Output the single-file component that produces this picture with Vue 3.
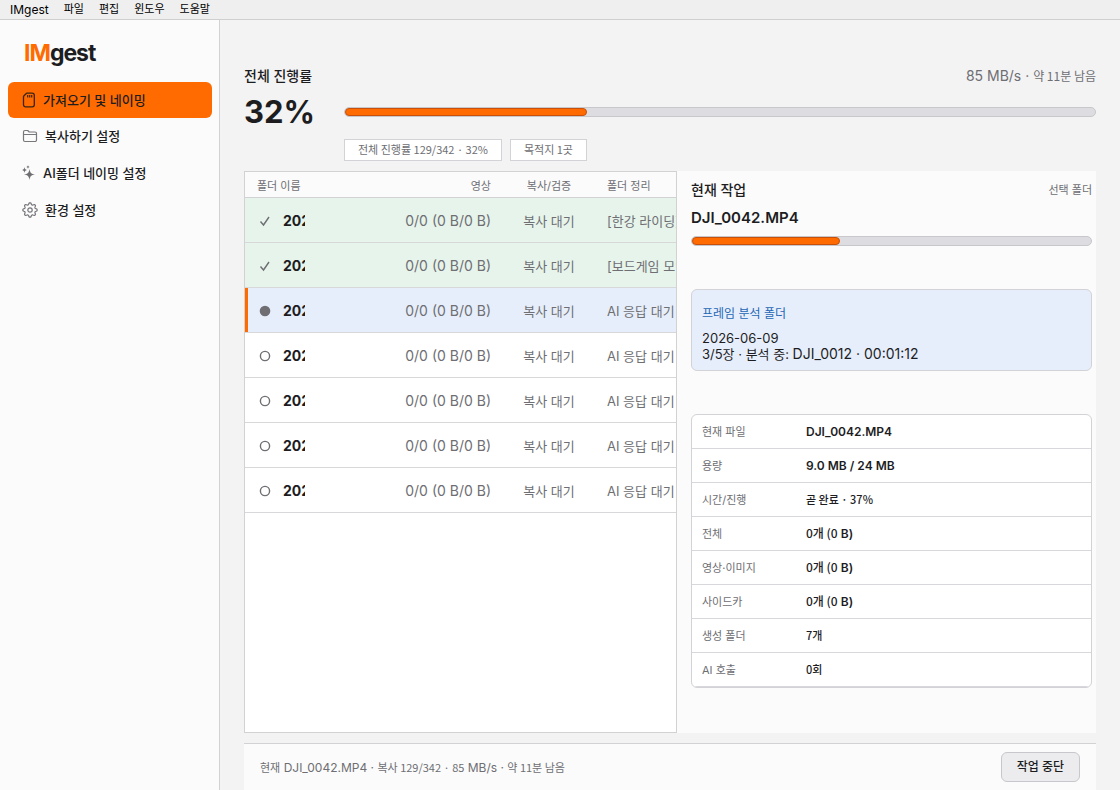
<script setup>
const menus = ['파일', '편집', '윈도우', '도움말']

const rows = [
  { state: 'done', name: '2026', tidy: '[한강 라이딩]' },
  { state: 'done', name: '2026', tidy: '[보드게임 모임]' },
  { state: 'active', name: '2026', tidy: 'AI 응답 대기' },
  { state: 'idle', name: '2026', tidy: 'AI 응답 대기' },
  { state: 'idle', name: '2026', tidy: 'AI 응답 대기' },
  { state: 'idle', name: '2026', tidy: 'AI 응답 대기' },
  { state: 'idle', name: '2026', tidy: 'AI 응답 대기' }
]

const details = [
  { label: '현재 파일', value: 'DJI_0042.MP4' },
  { label: '용량', value: '9.0 MB / 24 MB' },
  { label: '시간/진행', kr: '곧 완료 · 37%' },
  { label: '전체', kr: '0개 (0', value: ' B)' },
  { label: '영상·이미지', kr: '0개 (0', value: ' B)' },
  { label: '사이드카', kr: '0개 (0', value: ' B)' },
  { label: '생성 폴더', kr: '7개' },
  { label: 'AI 호출', kr: '0회' }
]

const total = 32.3
const current = 37.1

// Eight rounded teeth around the centre of an 18px box.
const gear = 'M' + Array.from({ length: 64 }, (_, i) => {
  const a = (i / 64) * Math.PI * 2
  const r = 6.3 + 0.9 * Math.tanh(2 * Math.cos(8 * a))
  return (9 + r * Math.cos(a)).toFixed(2) + ' ' + (9 + r * Math.sin(a)).toFixed(2)
}).join('L') + 'z'
</script>

<template>
  <div class="app">
    <nav class="menubar">
      <button type="button">IMgest</button>
      <button v-for="m in menus" :key="m" type="button" class="menu">{{ m }}</button>
    </nav>

    <div class="shell">
      <aside class="sidebar">
        <h1 class="brand"><span>IM</span>gest</h1>
        <button type="button" class="nav selected">
          <svg width="16" height="18" viewBox="0 0 16 18" fill="none" stroke="#3a2413">
            <path d="M6 2.200h5.300a2 2 0 0 1 2 2v9.600a2 2 0 0 1-2 2H4.500a2 2 0 0 1-2-2V6q0-.7.500-1.200l2-2q.4-.6 1-.6z" stroke-width="1.300" stroke-linejoin="round" />
            <path d="M6.700 4v2.500M8.700 4v2.500M10.700 4v2.500" stroke-width="1.200" />
          </svg>
          <span>가져오기 및 네이밍</span>
        </button>
        <button type="button" class="nav">
          <svg width="18" height="18" viewBox="0 0 18 18" fill="none" stroke="#77777c" stroke-width="1.200" stroke-linejoin="round">
            <path d="M2.500 13V5A1.500 1.500 0 0 1 4 3.500h2.700L8.200 5h5.800a1.500 1.500 0 0 1 1.500 1.500V13a1.500 1.500 0 0 1-1.500 1.500H4A1.500 1.500 0 0 1 2.500 13zM2.500 7.500h13" />
          </svg>
          <span>복사하기 설정</span>
        </button>
        <button type="button" class="nav">
          <svg width="16" height="18" viewBox="0 0 16 18" fill="#6e6e73">
            <path d="M8.500 5c.6 3.700 1.600 4.900 5.500 5.500-3.900.6-4.900 1.800-5.500 5.500-.6-3.700-1.600-4.900-5.500-5.500 3.900-.6 4.900-1.800 5.500-5.500z" />
            <path d="M3.500 3c.3 1.900.7 2.600 2.800 3-2.100.4-2.500 1.100-2.800 3-.3-1.900-.7-2.600-2.800-3 2.100-.4 2.500-1.100 2.800-3zM7 1c.2 1.300.5 1.700 1.800 2-1.300.3-1.600.7-1.800 2-.2-1.300-.5-1.700-1.800-2 1.300-.3 1.600-.7 1.800-2z" />
          </svg>
          <span>AI폴더 네이밍 설정</span>
        </button>
        <button type="button" class="nav">
          <svg width="18" height="18" viewBox="0 0 18 18" fill="none" stroke="#77777c" stroke-width="1.200" stroke-linejoin="round">
            <path :d="gear" />
            <circle cx="9" cy="9" r="2.200" />
          </svg>
          <span>환경 설정</span>
        </button>
      </aside>

      <main class="main">
        <header class="summary">
          <div class="summary-top">
            <h2 class="title">전체 진행률</h2>
            <p class="rate">85 MB/s · <span>약 11분 남음</span></p>
          </div>
          <div class="summary-body">
            <strong class="percent">32%</strong>
            <div class="summary-side">
              <div class="bar" role="progressbar" aria-label="전체 진행률" :aria-valuenow="total">
                <i :style="{ width: total + '%' }"></i>
              </div>
            </div>
          </div>
          <div class="chips">
            <span class="chip">전체 진행률 129/342 · 32%</span>
            <span class="chip">목적지 1곳</span>
          </div>
        </header>

        <div class="work">
          <section class="list">
            <table class="folders">
              <colgroup>
                <col class="c-name" /><col class="c-video" /><col class="c-copy" /><col class="c-tidy" />
              </colgroup>
              <thead>
                <tr><th>폴더 이름</th><th class="right">영상</th><th class="center">복사/검증</th><th>폴더 정리</th></tr>
              </thead>
              <tbody>
                <tr v-for="(r, i) in rows" :key="i" :class="r.state">
                  <td>
                    <div class="name">
                      <svg width="14" height="14" viewBox="0 0 14 14">
                        <path v-if="r.state === 'done'" d="M2.500 7.500l3 3.500 5.500-8" fill="none" stroke="#6e6e73" stroke-width="1.400" />
                        <circle v-else-if="r.state === 'active'" cx="7" cy="7" r="5.300" fill="#6e6e73" />
                        <circle v-else cx="7" cy="7" r="4.600" fill="none" stroke="#6e6e73" stroke-width="1.400" />
                      </svg>
                      <b>{{ r.name }}</b>
                    </div>
                  </td>
                  <td class="right video">0/0 (0 B/0 B)</td>
                  <td class="center">복사 대기</td>
                  <td>{{ r.tidy }}</td>
                </tr>
              </tbody>
            </table>
          </section>

          <section class="panel">
            <div class="panel-top">
              <h2 class="title">현재 작업</h2>
              <span class="hint">선택 폴더</span>
            </div>
            <h3 class="file">DJI_0042.MP4</h3>
            <div class="bar" role="progressbar" aria-label="현재 작업" :aria-valuenow="current">
              <i :style="{ width: current + '%' }"></i>
            </div>
            <div class="frame">
              <h4>프레임 분석 폴더</h4>
              <p>2026-06-09</p>
              <p>3/5장 · 분석 중: <span>DJI_0012 · 00:01:12</span></p>
            </div>
            <div class="details">
              <table>
                <tbody>
                  <tr v-for="d in details" :key="d.label">
                    <th scope="row">{{ d.label }}</th>
                    <td><span v-if="d.kr" class="krm" :class="{ small: !d.value }">{{ d.kr }}</span>{{ d.value }}</td>
                  </tr>
                </tbody>
              </table>
            </div>
          </section>
        </div>

        <footer class="status">
          <p><span>현재</span> DJI_0042.MP4 · <span>복사 129/342 · 85</span> MB/s · <span>약 11분 남음</span></p>
          <button type="button" class="stop">작업 중단</button>
        </footer>
      </main>
    </div>
  </div>
</template>

<style>
body {
  margin: 0;
  background: #f3f3f3;
}
</style>

<style scoped>
.app {
  display: flex;
  flex-direction: column;
  height: 100vh;
  min-height: 760px;
  font-family: Inter, "Noto Sans CJK KR", sans-serif;
  font-size: 14px;
  color: #1d1d1f;
  background: #f3f3f3;
}
.app * {
  box-sizing: border-box;
}
h1, h2, h3, h4, p {
  margin: 0;
  font-weight: 400;
}
button {
  font: inherit;
  color: inherit;
  border: 0;
  background: none;
  padding: 0;
}
.krm {
  font-family: "Noto Sans CJK KR", sans-serif;
  font-weight: 500;
}
.krm.small {
  font-size: 11px;
}
.menubar {
  display: flex;
  flex: none;
  align-items: flex-start;
  gap: 15px;
  height: 20px;
  padding: 0 10px;
  background: #efefef;
  border-bottom: 1px solid #cfcfcf;
  font-size: 12px;
  line-height: 19px;
  color: #000;
}
.menu {
  font-size: 11px;
  line-height: 18px;
}
.shell {
  display: flex;
  flex: 1;
  min-height: 0;
}
.sidebar {
  display: flex;
  flex-direction: column;
  flex: none;
  width: 220px;
  padding: 16px 7px 0 8px;
  background: #fbfbfb;
  border-right: 1px solid #d2d2d4;
}
.brand {
  padding-left: 16px;
  margin-bottom: 12px;
  font-size: 23px;
  line-height: 34px;
  font-weight: 700;
  letter-spacing: -1px;
}
.brand span {
  color: #ff6b00;
}
.nav {
  display: flex;
  align-items: center;
  gap: 6px;
  height: 36px;
  margin-bottom: 1px;
  padding: 0 13px;
  border-radius: 6px;
  font-size: 13px;
  line-height: 20px;
  font-weight: 500;
}
.nav.selected {
  background: #ff6b00;
  margin-bottom: 0;
}
.main {
  display: flex;
  flex-direction: column;
  flex: 1;
  min-width: 0;
  padding: 46px 24px 0;
}
.summary-top, .panel-top {
  display: flex;
  align-items: center;
  justify-content: space-between;
}
.title {
  font-size: 14px;
  line-height: 20px;
  font-weight: 500;
}
.rate {
  font-size: 14px;
  line-height: 20px;
  color: #6e6e73;
}
.rate span {
  font-family: "Noto Sans CJK KR", sans-serif;
  font-size: 12px;
}
.summary-body {
  display: flex;
  align-items: center;
  height: 52px;
}
.percent {
  width: 100px;
  font-size: 31px;
  line-height: 40px;
  font-weight: 700;
}
.summary-side {
  flex: 1;
}
.bar {
  height: 10px;
  border: 1px solid #c7c7cc;
  border-radius: 5px;
  background: #dcdce1;
}
.bar i {
  display: block;
  height: 8px;
  border: 1px solid #c8500a;
  border-radius: 4px;
  background: #ff6b00;
}
.chips {
  display: flex;
  gap: 8px;
  padding: 1px 0 0 100px;
}
.chip {
  height: 22px;
  padding: 0 13px;
  border: 1px solid #d2d2d7;
  background: #fff;
  font-family: "Noto Sans CJK KR", sans-serif;
  font-size: 11px;
  line-height: 19px;
  color: #6e6e73;
}
.work {
  display: grid;
  grid-template-columns: minmax(0, 433fr) minmax(0, 419fr);
  flex: 1;
  min-height: 0;
  margin: 10px 0;
}
.list {
  overflow: hidden;
  border: 1px solid #d2d2d4;
  background: #fff;
}
table {
  border-collapse: separate;
  border-spacing: 0;
  table-layout: fixed;
}
.folders {
  width: 480px;
}
.c-name { width: 110px; }
.c-video { width: 148px; }
.c-copy { width: 92px; }
.folders th {
  height: 26px;
  padding: 2px 12px 0;
  border-bottom: 1px solid #d2d2d4;
  background: #fbfbfb;
  font-size: 11px;
  line-height: 20px;
  font-weight: 400;
  color: #6e6e73;
  text-align: left;
}
.folders td {
  height: 45px;
  padding: 1px 12px 0;
  border-bottom: 1px solid #d8d8da;
  font-size: 13px;
  line-height: 20px;
  color: #6e6e73;
  white-space: nowrap;
}
.folders td.video { font-size: 14px; }
.folders .right { text-align: right; }
.folders .center { text-align: center; padding-left: 0; padding-right: 0; }
.done td { background: #e7f4eb; }
.active td { background: #e7eefb; }
.active td:first-child { box-shadow: inset 3px 0 #ff6b00; }
.folders td:first-child { padding-left: 13px; }
.name {
  display: flex;
  align-items: center;
  gap: 11px;
  font-size: 14px;
}
.name b {
  width: 22px;
  overflow: hidden;
  font-weight: 700;
  color: #1d1d1f;
}
.panel {
  padding: 9px 4px 0 14px;
  background: #fbfbfb;
}
.hint {
  font-size: 11px;
  line-height: 20px;
  color: #6e6e73;
}
.file {
  margin: 8px 0;
  font-size: 15px;
  line-height: 20px;
  font-weight: 600;
}
.frame {
  margin: 43px 0;
  padding: 14px 10px 8px;
  border: 1px solid #d2d2d7;
  border-radius: 6px;
  background: #e7eefb;
  font-size: 13px;
  line-height: 16px;
}
.frame h4 {
  margin-bottom: 6px;
  font-size: 12px;
  line-height: 20px;
  color: #1f66b5;
}
.frame span {
  font-size: 14px;
}
.details {
  overflow: hidden;
  border: 1px solid #d2d2d7;
  border-radius: 6px;
  background: #fff;
}
.details table {
  width: 100%;
}
.details th, .details td {
  height: 34px;
  padding: 0 10px;
  border-bottom: 1px solid #d8d8dc;
  font-size: 12px;
  line-height: 20px;
  text-align: left;
}
.details th {
  width: 104px;
  font-size: 11px;
  font-weight: 400;
  color: #6e6e73;
}
.details td {
  font-weight: 600;
}
.status {
  display: flex;
  flex: none;
  align-items: center;
  justify-content: space-between;
  height: 47px;
  padding: 0 16px;
  border-top: 1px solid #d2d2d4;
  background: #fbfbfb;
  font-size: 12px;
  line-height: 20px;
  color: #6e6e73;
}
.status span {
  font-family: "Noto Sans CJK KR", sans-serif;
  font-size: 11px;
}
.stop {
  height: 30px;
  padding: 0 15px;
  border: 1px solid #c7c7cc;
  border-radius: 6px;
  background: #ececee;
  font-weight: 500;
  color: #1d1d1f;
}
</style>
